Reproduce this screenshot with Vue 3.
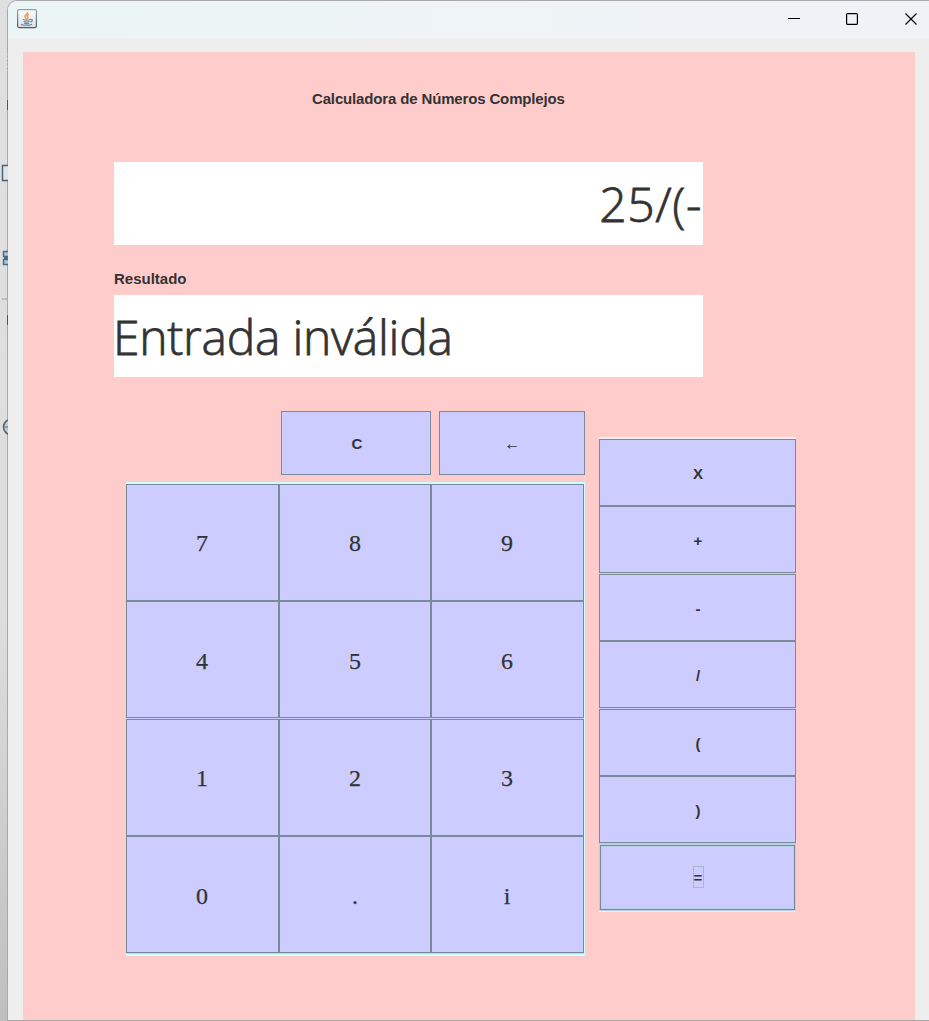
<script setup>
const digits = ['7', '8', '9', '4', '5', '6', '1', '2', '3', '0', '.', 'i']
const operators = ['X', '+', '-', '/', '(', ')']
const expression = '25/(-'
const result = 'Entrada inválida'
</script>

<template>
  <div class="desktop">
    <main class="window">
      <header class="titlebar">
        <svg class="java" width="20" height="20" viewBox="0 0 20 20" aria-label="Java">
          <defs>
            <linearGradient id="tile" x1="0" y1="0" x2="0" y2="1">
              <stop offset="0" stop-color="#fff" />
              <stop offset="1" stop-color="#dedfe0" />
            </linearGradient>
            <linearGradient id="edge" x1="0" y1="0" x2="0" y2="1">
              <stop offset="0" stop-color="#8fa2ae" />
              <stop offset="1" stop-color="#405f75" />
            </linearGradient>
          </defs>
          <rect x=".6" y=".6" width="18.800" height="18" rx="1.500" fill="url(#tile)" stroke="url(#edge)" stroke-width="1.200" />
          <path d="M10.500 3c.8 2-3.500 3-2.500 5 .3.700 1 1.200 1.400 1.800M11.800 5.500c-2.300 1-1.800 2-1 2.800.5.700.1 1.200-.4 1.700" fill="none" stroke="#ee9448" stroke-width="1.400" />
          <path d="M6 10.500c2 .7 5 .7 7.500 0M6.500 12.500c2 .7 4 .7 6 0M7 14.200c1.500.6 3.500.6 5 0M13.300 10.500c3-.6 2.500 2-.2 2.500M4.500 15c-1.500 1.500 8 1.800 10.500.2" fill="none" stroke="#6c8ca6" stroke-width="1.200" />
        </svg>
        <svg class="controls" width="131" height="14" viewBox="0 0 131 14" fill="none" stroke="#000" aria-hidden="true">
          <path d="M0 6.500h12" />
          <rect x="58.600" y="1.600" width="10.800" height="10.800" rx="1" stroke-width="1.200" />
          <path d="M117.500 1.500l11 11M128.500 1.500l-11 11" stroke-width="1.200" />
        </svg>
      </header>
      <section class="panel">
        <h1 class="title">Calculadora de Números Complejos</h1>
        <div class="display entry"><span>{{ expression }}</span></div>
        <h2 class="label">Resultado</h2>
        <div class="display result"><span>{{ result }}</span></div>
        <div class="keys">
          <div class="left">
            <div class="edit">
              <button class="key clear">C</button>
              <button class="key back">←</button>
            </div>
            <div class="digits">
              <button v-for="d in digits" :key="d" class="key digit">{{ d }}</button>
            </div>
          </div>
          <div class="operators">
            <button v-for="o in operators" :key="o" class="key">{{ o }}</button>
            <div class="focus-ring">
              <button class="key equals"><span>=</span></button>
            </div>
          </div>
        </div>
      </section>
    </main>
    <svg class="behind" width="8" height="1021" viewBox="0 0 8 1021" aria-hidden="true">
      <path d="M7 54.500h1M7 58.500h1M7 62.500h1M7 66.500h1M7 70.500h1" stroke="#c4c4c4" />
      <path d="M7 100h1v10h-1z M7 315h1v10h-1z" fill="#555" />
      <path d="M8 165.500H2.500v15H8" fill="#dce5ed" stroke="#4c5f6e" stroke-width="1.400" />
      <path d="M8 251.500H3.500v5H8M8 259.500H3.500v5H8M4 258h4" fill="#a9c4d9" stroke="#4d6a80" stroke-width="1.400" />
      <path d="M2 299h6" stroke="#b5b5b5" stroke-width="1.500" />
      <circle cx="11" cy="427" r="7.500" fill="#c5ccd1" stroke="#5d6870" stroke-width="1.700" />
      <path d="M5 427h3" stroke="#5d6870" />
    </svg>
  </div>
</template>

<style>
body {
  margin: 0;
  overflow: hidden;
}
</style>

<style scoped>
* {
  box-sizing: border-box;
}
.desktop {
  position: relative;
  width: 929px;
  height: 1021px;
  padding-left: 7px;
  overflow: hidden;
  background: linear-gradient(#dfdfdf, #dedede 60%, #bfbfbf);
  font-family: "Liberation Sans", Arial, sans-serif;
  color: #333;
}
.behind {
  position: absolute;
  left: 0;
  top: 0;
}
.window {
  width: 922px;
  height: 1021px;
  border: 1px solid #a9a9a9;
  border-right: 0;
  border-radius: 10px 0 0 0;
  background: #eee;
  overflow: hidden;
}
.titlebar {
  display: flex;
  justify-content: space-between;
  height: 37px;
  padding: 8px 10px 0 9px;
  background: linear-gradient(90deg, #ebf5f5, #eff3f7 70%);
}
.controls {
  margin-top: 3px;
}
.panel {
  width: 892px;
  height: 968px;
  margin: 14px 0 0 15px;
  padding: 38px 0 0 91px;
  background: #ffcccc;
}
.title,
.label {
  margin: 0;
  font-size: 15px;
  line-height: 18px;
  font-weight: bold;
  white-space: nowrap;
}
.title {
  margin-left: 198px;
  letter-spacing: -0.15px;
}
.display {
  display: flex;
  align-items: center;
  width: 589px;
  background: #fff;
  font-family: "Open Sans", "Noto Sans", sans-serif;
  font-size: 48px;
  font-weight: 300;
  -webkit-text-stroke: 0.8px #333;
  line-height: 64px;
  white-space: pre;
}
.entry {
  height: 83px;
  margin-top: 54px;
  padding-right: 1px;
  letter-spacing: 0.6px;
  justify-content: flex-end;
}
.label {
  margin-top: 25px;
}
.result {
  height: 82px;
  margin-top: 7px;
  padding-top: 1px;
  letter-spacing: -0.26px;
}
.result span {
  margin-left: -1px;
}
.keys {
  display: flex;
  align-items: flex-start;
  gap: 14px;
  margin: 34px 0 0 12px;
}
.left {
  width: 459px;
}
.edit {
  display: grid;
  grid-template-columns: 150px 146px;
  gap: 8px;
  height: 64px;
  justify-content: end;
}
.key {
  display: flex;
  align-items: center;
  justify-content: center;
  min-width: 0;
  margin: 0;
  padding: 2px 0 0 1px;
  border: 1px solid #7a8a99;
  border-radius: 0;
  background: #ccccff;
  color: #333;
  font: bold 15px/18px "Liberation Sans", Arial, sans-serif;
}
.clear {
  padding: 1px 0 0 2px;
}
.back {
  padding: 1px 0 0;
  -webkit-text-stroke: 0.3px #333;
}
.digits {
  display: grid;
  grid-template-columns: 153px 152px 153px;
  grid-template-rows: 117px 118px 117px 117px;
  margin-top: 7px;
  padding: 2px 1px 3px 0;
  background: #ccffff;
}
.digit {
  padding: 1px 1px 0 0;
  font: 24px/30px "Liberation Serif", "Times New Roman", serif;
  -webkit-text-stroke: 0.25px #333;
  box-shadow: 0 1px #ccccff;
}
.digit:nth-child(3n + 2) {
  padding-right: 0;
}
.digit:nth-child(n + 4):nth-child(-n + 6) {
  margin-bottom: 1px;
  padding-top: 2px;
}
.digit:nth-child(n + 10) {
  padding-top: 2px;
}
.operators {
  display: grid;
  grid-template-rows: 67px 68px 67px 68px 67px 67px 68px;
  width: 197px;
  margin-top: 26px;
  padding: 2px 0 1px;
  background: #eee;
}
.operators > .key {
  box-shadow: 0 1px #ccccff;
}
.operators > .key:nth-child(2),
.operators > .key:nth-child(4) {
  margin-bottom: 1px;
}
.focus-ring {
  display: grid;
  padding: 2px 1px 1px;
  background: #b8cfe5;
}
.focus-ring .equals {
  padding: 0 0 1px 1px;
  box-shadow: inset 0 0 0 1px #b8cfe5;
}
.equals span {
  width: 11px;
  height: 22px;
  border: 1px solid #a3b8cc;
  line-height: 22px;
  display: flex;
  justify-content: center;
}
</style>
